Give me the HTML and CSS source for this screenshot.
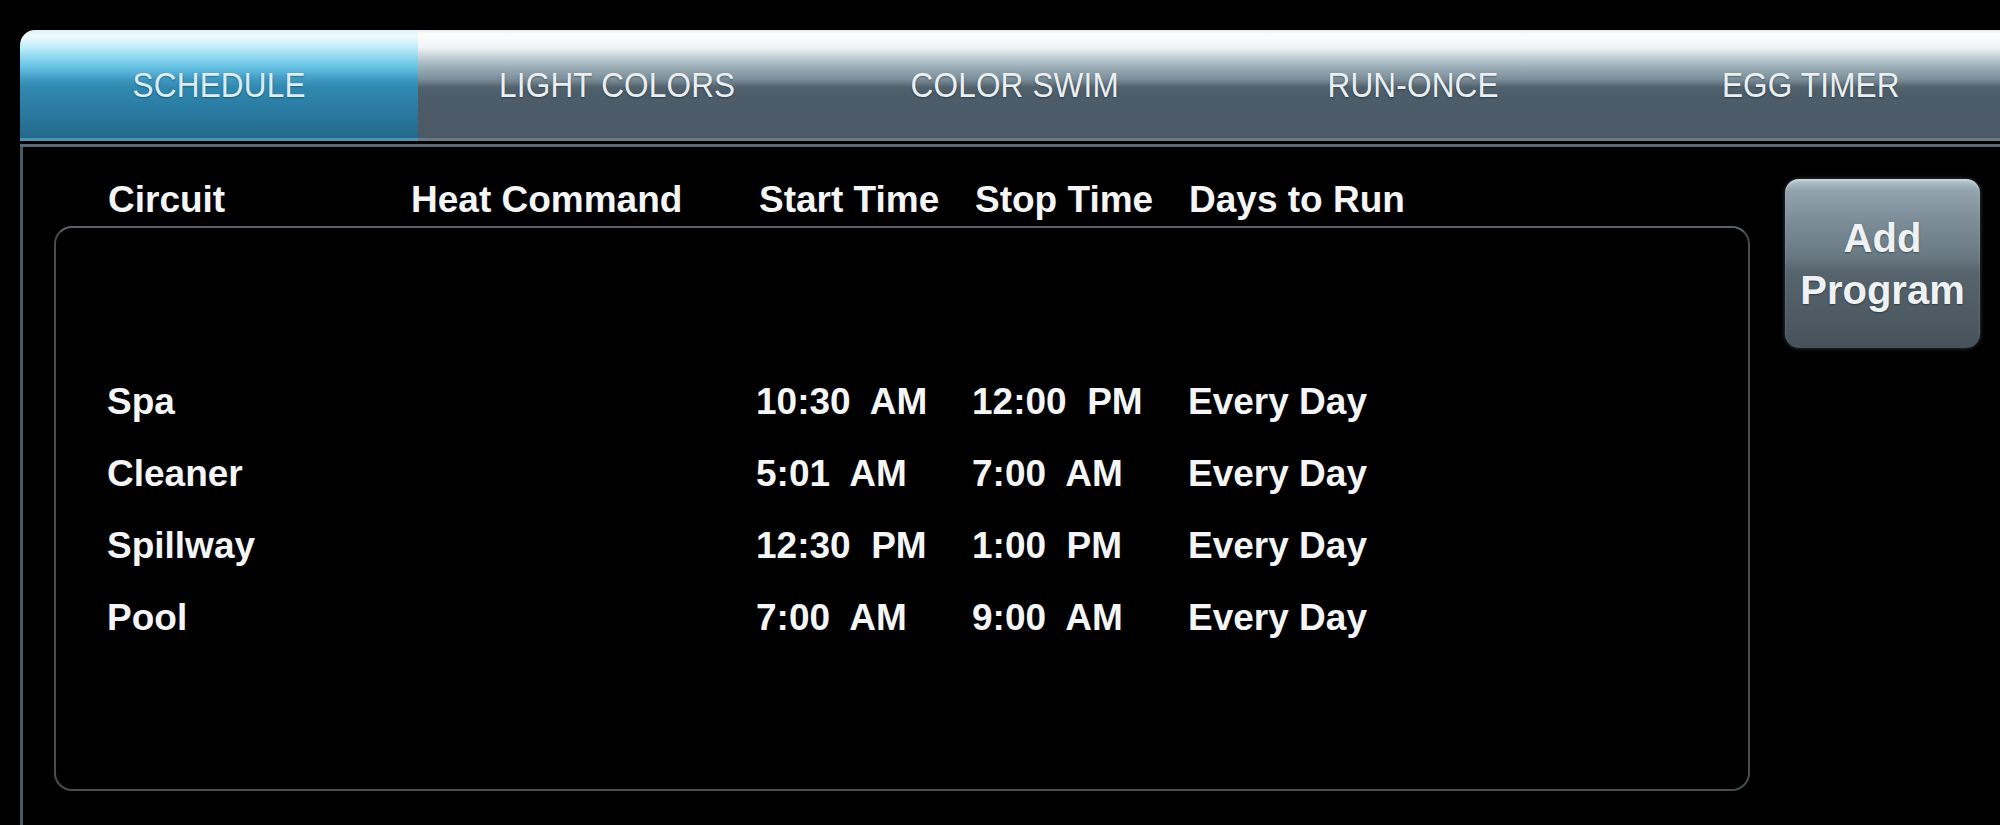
FILE: index.html
```html
<!DOCTYPE html>
<html lang="en">
<head>
<meta charset="utf-8">
<title>Schedule</title>
<link rel="stylesheet" href="styles.css">
</head>
<body>
<div class="screen">
  <div class="tabbar">
    <div class="tab active"><span class="tab-label">SCHEDULE</span></div>
    <div class="tab"><span class="tab-label">LIGHT COLORS</span></div>
    <div class="tab"><span class="tab-label">COLOR SWIM</span></div>
    <div class="tab"><span class="tab-label">RUN-ONCE</span></div>
    <div class="tab"><span class="tab-label">EGG TIMER</span></div>
  </div>
  <div class="tabrule"></div>
  <div class="panel">
    <div class="schedule">
      <div class="cols head">
        <div>Circuit</div>
        <div>Heat Command</div>
        <div>Start Time</div>
        <div>Stop Time</div>
        <div>Days to Run</div>
      </div>
      <div class="box">
        <div class="cols row">
          <div>Spa</div><div></div><div class="time">10:30  AM</div><div class="time">12:00  PM</div><div>Every Day</div>
        </div>
        <div class="cols row">
          <div>Cleaner</div><div></div><div class="time">5:01  AM</div><div class="time">7:00  AM</div><div>Every Day</div>
        </div>
        <div class="cols row">
          <div>Spillway</div><div></div><div class="time">12:30  PM</div><div class="time">1:00  PM</div><div>Every Day</div>
        </div>
        <div class="cols row">
          <div>Pool</div><div></div><div class="time">7:00  AM</div><div class="time">9:00  AM</div><div>Every Day</div>
        </div>
      </div>
    </div>
    <button class="add-btn">Add<br>Program</button>
  </div>
</div>
</body>
</html>
```
FILE: styles.css
```css
html, body {
  margin: 0;
  padding: 0;
  background: #000;
  width: 2000px;
  height: 825px;
  overflow: hidden;
}
body {
  font-family: "Liberation Sans", Arial, sans-serif;
  color: #f3f5f6;
}
.screen {
  margin-left: 20px;
  padding-top: 30px;
  width: 1990px;
}
.tabbar {
  display: flex;
  height: 111px;
  border-top-left-radius: 15px;
  overflow: hidden;
}
.tab {
  flex: 0 0 398px;
  box-sizing: border-box;
  height: 111px;
  display: flex;
  align-items: center;
  justify-content: center;
  padding-top: 2px;
  border-bottom: 3px solid #6a7a84;
  background: linear-gradient(to bottom,
    #e8eef0 0%, #fcfdfd 4%, #f0f4f5 16%, #c8d4da 24%, #9aacb6 35%,
    #7a8c97 46%, #52626d 53%, #4c5c68 60%, #4a5965 100%);
}
.tab.active {
  border-bottom-color: #4a94b8;
  background: linear-gradient(to bottom,
    #dff4fa 0%, #eefafd 6%, #c0ecf9 16%, #8ad6f0 26%, #64c0e2 35%,
    #3f98c0 46%, #3189b0 53%, #2b7ea5 70%, #24698c 100%);
}
.tab-label {
  display: inline-block;
  font-size: 35px;
  letter-spacing: 0.2px;
  color: #e9eff2;
  transform: scaleX(0.9);
  text-shadow: 0 1px 2px rgba(0, 0, 0, 0.35);
}
.tab.active .tab-label {
  color: #dcedf4;
}
.tabrule {
  height: 3px;
  margin-top: 3px;
  background: #5a6a72;
}
.panel {
  display: flex;
  align-items: flex-start;
  height: 678px;
  padding-left: 31px;
  border-left: 3px solid #4a5860;
}
.schedule {
  width: 1696px;
  flex: 0 0 1696px;
}
.cols {
  display: grid;
  grid-template-columns: 303px 348px 216px 214px 1fr;
  font-weight: bold;
  font-size: 37px;
  line-height: 44px;
}
.head {
  padding-top: 31px;
  padding-left: 54px;
}
.box {
  box-sizing: border-box;
  margin-top: 4px;
  height: 565px;
  border: 2px solid #474d50;
  border-top-color: #56646a;
  border-radius: 18px;
  padding-top: 138px;
}
.row {
  height: 72px;
  align-items: center;
  padding-left: 51px;
}
.time {
  white-space: pre;
  margin-left: -2px;
}
.add-btn {
  margin-left: 35px;
  margin-top: 32px;
  width: 195px;
  height: 169px;
  flex: 0 0 195px;
  border: none;
  border-radius: 14px;
  padding: 0;
  font-family: "Liberation Sans", Arial, sans-serif;
  font-weight: bold;
  font-size: 40px;
  line-height: 52px;
  color: #eef2f4;
  text-shadow: 0 1px 2px rgba(0, 0, 0, 0.4);
  background: linear-gradient(to bottom,
    #b8c8d0 0%, #92a3ad 7%, #7c8d97 25%, #6a7a84 45%,
    #56646d 55%, #4e5b64 80%, #46525a 100%);
  box-shadow: inset 0 2px 2px rgba(255, 255, 255, 0.3), 0 0 4px rgba(140, 160, 170, 0.4);
}
```
